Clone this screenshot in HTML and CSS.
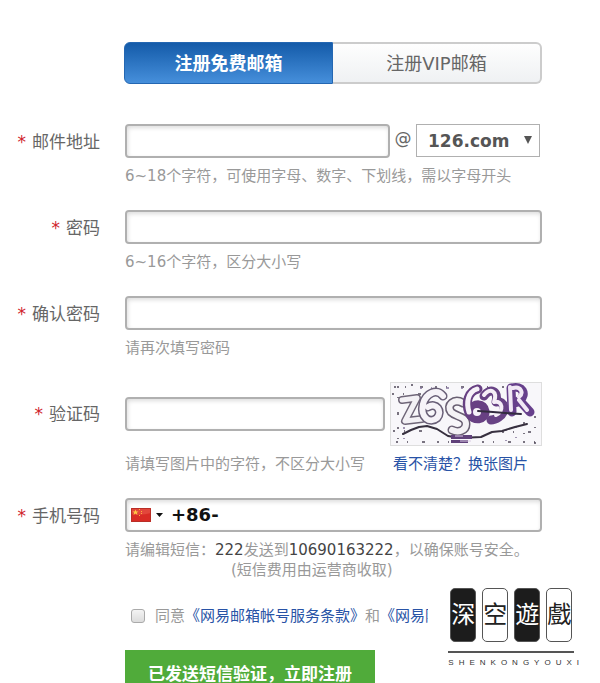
FILE: index.html
```html
<!DOCTYPE html>
<html lang="zh-CN">
<head>
<meta charset="utf-8">
<meta name="viewport" content="width=device-width, initial-scale=1">
<title>注册免费邮箱</title>
<link rel="stylesheet" href="styles.css">
</head>
<body>
<main class="page">
  <nav class="tabs">
    <button type="button" class="tab tab-active">注册免费邮箱</button>
    <button type="button" class="tab">注册VIP邮箱</button>
  </nav>

  <form class="form">
    <div class="row">
      <label class="label" for="mail"><span class="star">*</span>邮件地址</label>
      <div class="field">
        <div class="line">
          <input class="input" id="mail" type="text">
          <span class="at">@</span>
          <span class="domain">
            <select class="select" aria-label="126.com"><option>126.com</option></select>
            <svg class="select-arrow" viewBox="0 0 8 8" width="8" height="8"><path d="M0 0h8L4 8z" fill="#555"/></svg>
          </span>
        </div>
        <p class="help">6~18个字符，可使用字母、数字、下划线，需以字母开头</p>
      </div>
    </div>

    <div class="row">
      <label class="label" for="pass"><span class="star">*</span>密码</label>
      <div class="field">
        <input class="input" id="pass" type="password">
        <p class="help">6~16个字符，区分大小写</p>
      </div>
    </div>

    <div class="row">
      <label class="label" for="confirm"><span class="star">*</span>确认密码</label>
      <div class="field">
        <input class="input" id="confirm" type="password">
        <p class="help">请再次填写密码</p>
      </div>
    </div>

    <div class="row">
      <label class="label label-tall" for="code"><span class="star">*</span>验证码</label>
      <div class="field captcha-field">
        <input class="input" id="code" type="text">
        <svg class="captcha" viewBox="0 0 152 64">
          <rect x=".5" y=".5" width="151" height="63" fill="#f8f7fa" stroke="#dedede"/>
          <g fill="none" stroke="#4f4858" stroke-width="1.5" stroke-dasharray="2 9 1 14 3 12">
            <path d="M4 5h110M2 12h40M3 49h30M6 60h54M92 60h56M112 50h36M8 4v56M22 2v10M134 40v22M145 34v28"/>
            <path d="M30 6h48M14 45v16M116 47v15M126 44v18" stroke="#84769c"/>
          </g>
          <g fill="none" stroke-linecap="round" stroke-linejoin="round">
            <path d="M12 18l15-2-12 23 17-2" stroke="#6f6678" stroke-width="8"/>
            <path d="M12 18l15-2-12 23 17-2" stroke="#f3f1f5" stroke-width="5"/>
            <path d="M53 14c-6-8-17-3-20 8-3 14 7 20 14 14 6-7-1-16-9-11" stroke="#695f77" stroke-width="9"/>
            <path d="M53 14c-6-8-17-3-20 8-3 14 7 20 14 14 6-7-1-16-9-11" stroke="#f6f3f8" stroke-width="6"/>
            <path d="M73 21c-9-5-17 2-12 9 5 5 15 4 15 12 0 7-8 9-14 6" stroke="#695f72" stroke-width="9"/>
            <path d="M73 21c-9-5-17 2-12 9 5 5 15 4 15 12 0 7-8 9-14 6" stroke="#f4f2f5" stroke-width="6"/>
            <path d="M88 7c-10 2-13 14-9 24 4 9 17 7 16-2-1-8-11-8-14-1" stroke="#684083" stroke-width="9"/>
            <path d="M87 7c-9 3-11 13-8 23" stroke="#f6f1f8" stroke-width="5"/>
            <ellipse cx="87" cy="30" rx="4" ry="4" fill="#f6f1f8" stroke="none"/>
            <path d="M94 14c6-9 15-5 12 6 9-2 11 10 3 15-3 2-5 3-8 3" stroke="#684385" stroke-width="9"/>
            <path d="M94 13c6-8 14-4 10 7 9-2 10 9 2 13" stroke="#f5eef7" stroke-width="4"/>
            <path d="M121 6l1 24M122 6c10-3 15 6 8 12-2 2-4 3-7 3M130 19l10 11" stroke="#67408c" stroke-width="9"/>
            <path d="M120 5l1 23M123 6c8-2 11 5 6 9M129 18l8 10" stroke="#f1e8f5" stroke-width="4"/>
            <path d="M88 29l15 1 12 1 16 1" stroke="#332c40" stroke-width="2"/>
            <path d="M13 52l8-4 8-3 8-1 10 3 11 7 12 2 21-1 11-5 10-1 13-4 12-3" stroke="#37303f" stroke-width="2"/>
          </g>
          <path d="M61 53h21v4H61zM61 58h17v3H61z" fill="#60417a"/>
          <path d="M65 54h8M70 59h11" stroke="#d9cbe3" stroke-width="1"/>
        </svg>
        <p class="help">请填写图片中的字符，不区分大小写</p>
        <a class="link refresh" href="#">看不清楚？换张图片</a>
      </div>
    </div>

    <div class="row">
      <label class="label" for="phone"><span class="star">*</span>手机号码</label>
      <div class="field">
        <div class="phone">
          <button type="button" class="country" aria-label="+86">
            <svg viewBox="0 0 20 14" width="20" height="14"><path d="M0 0h20v14H0z" fill="#d92b25"/><path d="M0 0h20v5Q10 8 0 6z" fill="#e2463c"/><path d="M4.500 1.500l.8 2h2.200L5.800 4.800l.7 2.200-2-1.400L2.500 7l.7-2.200L1.500 3.500h2.200z" fill="#ffca43"/><path d="M8 1h1v1H8zM10 3h1v1h-1zM10 5h1v1h-1zM8 7h1v1H8z" fill="#ffb13b"/><path d="M.5.5h19v13H.5z" fill="none" stroke="#b92e27"/></svg>
            <svg viewBox="0 0 7 4" width="7" height="4"><path d="M0 0h7L3.500 4z" fill="#111"/></svg>
          </button>
          <input class="phone-input" id="phone" type="tel" value="+86-">
        </div>
        <p class="help">请编辑短信：<span class="strong">222</span>发送到<span class="strong">10690163222</span>，以确保账号安全。</p>
        <p class="help help-fee">(短信费用由运营商收取)</p>
      </div>
    </div>

    <div class="agree">
      <input class="check" id="agree" type="checkbox">
      <label for="agree">同意</label><a class="link" href="#">《网易邮箱帐号服务条款》</a><span>和</span><a class="link" href="#">《网易隐</a>
    </div>

    <button type="submit" class="submit">已发送短信验证，立即注册</button>
  </form>

  <div class="brand">
    <div class="tiles">
      <span class="tile tile-dark">深</span>
      <span class="tile">空</span>
      <span class="tile tile-dark">遊</span>
      <span class="tile">戲</span>
    </div>
    <div class="brand-name">SHENKONGYOUXI</div>
  </div>
</main>
</body>
</html>
```
FILE: styles.css
```css
* {
  box-sizing: border-box;
}

body {
  margin: 0;
  background: #fff;
  color: #666;
  font: 15px/20px "DejaVu Sans", "Noto Sans CJK SC", sans-serif;
}

button,
input,
select {
  font: inherit;
  color: inherit;
}

.page {
  position: relative;
  height: 100vh;
  overflow: hidden;
  padding: 42px 58px 0 0;
}

.tabs {
  display: flex;
  margin-left: 124px;
}

.tab {
  flex: 1;
  height: 42px;
  padding: 2px 0 0;
  border: 2px solid #ccc;
  border-left: 0;
  border-radius: 0 6px 6px 0;
  background: linear-gradient(#fefefe, #eff1f3);
  font-size: 18px;
}

.tab-active {
  border: 1px solid #2467b2;
  border-radius: 6px 0 0 6px;
  background: linear-gradient(#145ba9, #468fdb);
  color: #fff;
  font-weight: bold;
}

.form {
  display: flex;
  flex-direction: column;
  gap: 24px;
  margin-top: 40px;
}

.row {
  display: grid;
  grid-template-columns: 100px 1fr;
  column-gap: 25px;
}

.label {
  display: flex;
  justify-content: flex-end;
  gap: 6px;
  font-size: 17px;
  line-height: 36px;
  white-space: nowrap;
}

.label-tall {
  line-height: 64px;
}

.star {
  color: #d0242b;
}

.field {
  min-width: 0;
}

.input,
.phone {
  display: block;
  width: 100%;
  height: 34px;
  border: 2px solid #b0b0b0;
  border-radius: 4px;
  background: #fff;
  box-shadow: inset 1px 2px 4px #ddd;
}

.line {
  display: flex;
}

.line .input {
  flex: 1;
  min-width: 0;
}

.at {
  width: 26px;
  font-size: 17px;
  line-height: 28px;
  text-align: center;
}

.domain {
  position: relative;
  margin-right: 2px;
}

.select {
  width: 124px;
  height: 33px;
  padding: 0 11px;
  appearance: none;
  border: 1px solid #b0b0b0;
  border-radius: 0;
  background: #fff;
  color: #555;
  font-size: 17px;
  font-weight: bold;
}

.select-arrow {
  position: absolute;
  top: 12px;
  right: 8px;
  pointer-events: none;
}

.help {
  margin: 8px 0 0;
  color: #999;
  white-space: nowrap;
}

.help-fee {
  margin: 0;
  padding-left: 106px;
}

.strong {
  color: #444;
}

.captcha-field {
  display: grid;
  grid-template-columns: 1fr 152px;
  column-gap: 5px;
  align-items: center;
}

.captcha {
  display: block;
  width: 152px;
  height: 64px;
}

.link {
  color: #2853a6;
  text-decoration: none;
}

.refresh {
  margin: 8px 0 0 3px;
}

.phone {
  display: flex;
  align-items: center;
}

.country {
  display: flex;
  align-items: center;
  gap: 5px;
  padding: 0 4px;
  border: 0;
  background: none;
}

.phone-input {
  flex: 1;
  min-width: 0;
  padding: 0 4px;
  border: 0;
  background: none;
  color: #111;
  font-size: 18px;
  font-weight: bold;
}

.agree {
  display: flex;
  align-items: center;
  margin: 2px 114px 0 131px;
  overflow: hidden;
  color: #999;
  white-space: nowrap;
}

.check {
  flex: none;
  width: 14px;
  height: 14px;
  margin: 0 10px 0 0;
  appearance: none;
  border: 1px solid #aaa;
  border-radius: 3px;
  background: linear-gradient(#f4f4f4, #dcdcdc);
}

.submit {
  align-self: flex-start;
  height: 48px;
  margin-left: 125px;
  padding: 0 23px;
  border: 0;
  background: #50ab3a;
  color: #fff;
  font-size: 17px;
  font-weight: bold;
  white-space: nowrap;
}

.brand {
  position: absolute;
  top: 588px;
  right: 16px;
}

.tiles {
  display: flex;
  gap: 6px;
  margin-right: 10px;
  padding: 0 0 9px 2px;
  border-bottom: 2px solid #555;
}

.tile {
  width: 26px;
  height: 54px;
  border: 1px solid #555;
  border-radius: 5px;
  color: #222;
  font-size: 24px;
  line-height: 52px;
  text-align: center;
}

.tile-dark {
  background: #1c1c1c;
  color: #fff;
}

.brand-name {
  font: 8px/20px "Liberation Sans", sans-serif;
  letter-spacing: 5px;
  color: #333;
}
```
